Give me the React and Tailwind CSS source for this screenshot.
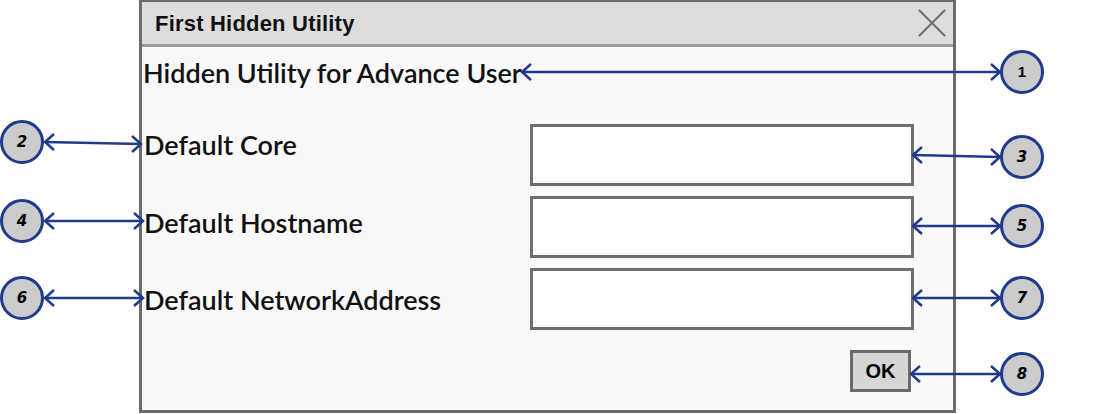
import React from "react";

const NAVY = "#213a8c";

// callout arrows: [x1, y1, x2, y2], heads at both ends
const arrows = [
  [522, 72, 1000, 72],
  [45, 142, 141, 144],
  [913, 155, 1000, 157],
  [45, 221, 143, 221],
  [913, 226, 1000, 226],
  [45, 298, 143, 298],
  [913, 298, 1000, 298],
  [911, 374, 1000, 374],
];

const badges = [
  { n: "1", x: 1022, y: 72, plain: true },
  { n: "2", x: 22, y: 142 },
  { n: "3", x: 1022, y: 157 },
  { n: "4", x: 22, y: 221 },
  { n: "5", x: 1022, y: 226 },
  { n: "6", x: 22, y: 298 },
  { n: "7", x: 1022, y: 298 },
  { n: "8", x: 1022, y: 374 },
];

const Head = ({ x, y, dir }) => (
  <path d={`M ${x - dir * 9} ${y - 8} L ${x} ${y} L ${x - dir * 9} ${y + 8}`} fill="none" stroke={NAVY} strokeWidth="2.5" />
);

const Row = ({ label, pad }) => (
  <div className="flex items-start">
    <div className={`w-[388px] pl-[2px] text-[27px] leading-[27px] font-semibold text-[#111] ${pad}`}>{label}</div>
    <div className="w-[384px] h-[62px] border-[3px] border-[#6e6e6e] bg-white"></div>
  </div>
);

export default function App() {
  return (
    <div className="relative w-[1107px] h-[414px] bg-white overflow-hidden" style={{ fontFamily: "Lato, 'Open Sans', sans-serif" }}>
      <div className="ml-[139px] w-[817px] h-[413px] border-[3px] border-t-[2px] border-[#6b6b6b] flex flex-col">
        {/* title bar */}
        <div className="h-[45px] bg-[#dddddd] border-b-[3px] border-[#9a9a9a] flex items-center justify-between pl-[13px] pr-[6px]">
          <span className="text-[22px] font-bold text-[#111] tracking-[0.2px]" style={{ fontFamily: "'Liberation Sans', Arial, sans-serif" }}>
            First Hidden Utility
          </span>
          <svg width="30" height="30" viewBox="0 0 30 30">
            <path d="M2 2 L28 28 M28 2 L2 28" stroke="#6e6e6e" strokeWidth="2" />
          </svg>
        </div>

        {/* body */}
        <div className="flex-1 bg-[#f9f9f9] flex flex-col">
          <div className="pt-[12px] pl-[1px] text-[27px] leading-[27px] font-semibold text-[#111]">Hidden Utility for Advance User</div>
          <div className="mt-[38px] flex flex-col gap-[10px]">
            <Row label="Default Core" pad="pt-[7px]" />
            <Row label="Default Hostname" pad="pt-[13px]" />
            <Row label="Default NetworkAddress" pad="pt-[18px]" />
          </div>
          <div className="flex justify-end pr-[42px] mt-[20px]">
            <button className="w-[61px] h-[42px] border-[3px] border-[#6a6a6a] bg-[#d6d6d6] text-[20px] font-bold text-black" style={{ fontFamily: "'Liberation Sans', Arial, sans-serif" }}>
              OK
            </button>
          </div>
        </div>
      </div>

      {/* callout annotations */}
      <svg className="absolute inset-0 pointer-events-none" width="1107" height="414">
        {arrows.map(([x1, y1, x2, y2], i) => (
          <g key={i}>
            <line x1={x1} y1={y1} x2={x2} y2={y2} stroke={NAVY} strokeWidth="2.5" />
            <Head x={x1} y={y1} dir={-1} />
            <Head x={x2} y={y2} dir={1} />
          </g>
        ))}
      </svg>
      {badges.map((b) => (
        <div
          key={b.n}
          className="absolute w-[44px] h-[44px] rounded-full border-[3px] border-[#213a8c] bg-[#cccccc] flex items-center justify-center text-[15px] text-black font-semibold"
          style={{
            left: b.x - 22,
            top: b.y - 22,
            fontFamily: b.plain ? "'Liberation Sans', Arial, sans-serif" : "'DejaVu Sans', sans-serif",
            fontStyle: b.plain ? "normal" : "italic",
          }}
        >
          {b.n}
        </div>
      ))}
    </div>
  );
}
